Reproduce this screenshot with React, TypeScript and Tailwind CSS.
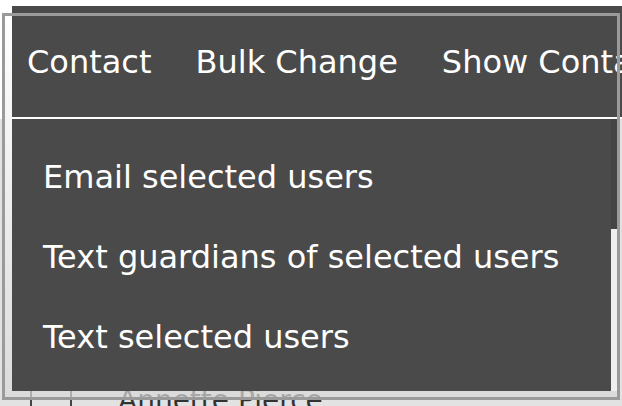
const tabs = ['Contact', 'Bulk Change', 'Show Contacts'];

const actions = [
  'Email selected users',
  'Text guardians of selected users',
  'Text selected users',
];

export default function App() {
  return (
    <div className="relative w-[622px] h-[406px] overflow-hidden bg-white font-['DejaVu_Sans',Verdana,sans-serif]">
      {/* Page behind the menu */}
      <div className="pt-[6px]">
        <nav className="ml-[12px] h-[113px] bg-[#4a4a4a] border-b-2 border-white flex items-center gap-[44px] pl-[15px] text-white text-[32px] whitespace-nowrap">
          {tabs.map((t) => (
            <span key={t}>{t}</span>
          ))}
        </nav>

        {/* Table rows (mostly covered by the menu) */}
        <div className="bg-[#e2e2e2] pt-[262px]">
          <div className="h-[60px] flex items-start">
            <div className="ml-[30px] w-[2px] h-full bg-[#444]" />
            <div className="ml-[38px] w-[2px] h-full bg-[#444]" />
            <span className="ml-[46px] mt-[6px] text-[28px] leading-none text-[#333] whitespace-nowrap">
              Annette Pierce
            </span>
          </div>
        </div>
      </div>

      {/* Dropdown menu */}
      <div className="absolute left-[12px] top-[119px] w-[605px] h-[272px] flex bg-[#4a4a4a]">
        <ul className="flex-1 pt-[18px] pl-[31px] text-white text-[32px] whitespace-nowrap">
          {actions.map((a) => (
            <li key={a} className="h-[80px] flex items-center">
              {a}
            </li>
          ))}
        </ul>
        <div className="w-[6px] flex flex-col">
          <div className="h-[110px] bg-[#444]" />
          <div className="flex-1 bg-[#efefef]" />
        </div>
      </div>

      {/* Highlight frame */}
      <div className="absolute left-[2px] top-[13px] w-[618px] h-[387px] border-[3px] border-[#9a9a9a] pointer-events-none" />
      <div className="absolute left-[5px] top-[16px] w-[7px] h-[375px] bg-gradient-to-b from-white to-[#dcdcdc]" />
      <div className="absolute left-[5px] top-[391px] w-[612px] h-[6px] bg-[#d9d9d9]/70" />
    </div>
  );
}
